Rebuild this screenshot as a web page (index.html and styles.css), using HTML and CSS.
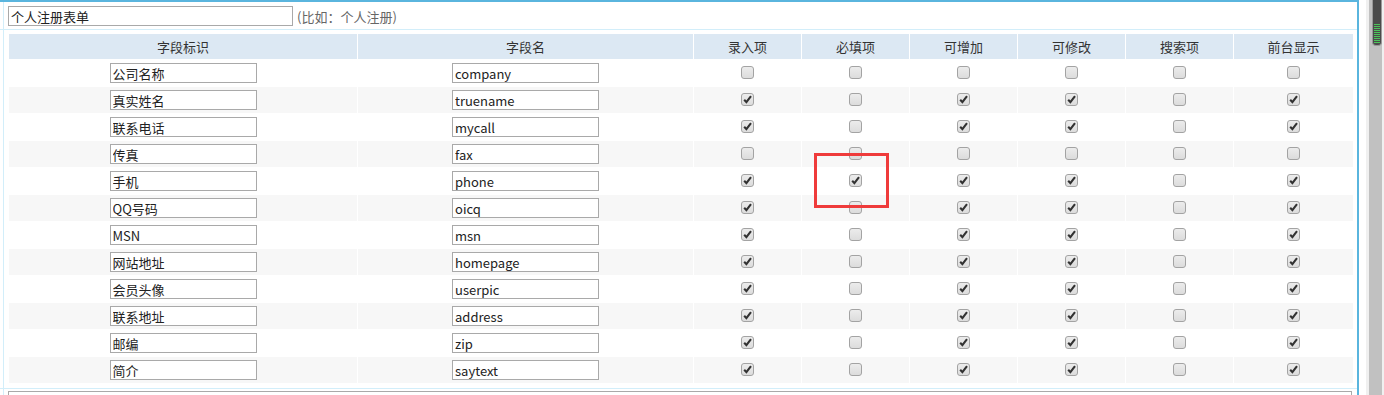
FILE: index.html
```html
<!DOCTYPE html>
<html lang="zh-CN">
<head>
  <meta charset="UTF-8">
  <title>会员注册表单字段</title>
  <link rel="stylesheet" href="styles.css">
</head>
<body>
  <div class="page">
    <div class="frame">
      <div class="linha">
        <div class="celula titulo">
          <input type="text" class="nome-form" value="个人注册表单">
          <span class="dica">(比如：个人注册)</span>
        </div>
      </div>
      <div class="linha">
        <div class="celula tabela-wrap">
          <table class="campos">
            <thead>
              <tr>
                <th class="c-id">字段标识</th>
                <th class="c-nome">字段名</th>
                <th class="c-chk">录入项</th>
                <th class="c-chk">必填项</th>
                <th class="c-chk">可增加</th>
                <th class="c-chk">可修改</th>
                <th class="c-chk">搜索项</th>
                <th class="c-ult">前台显示</th>
              </tr>
            </thead>
            <tbody id="corpo"></tbody>
          </table>
        </div>
      </div>
      <div class="linha">
        <div class="celula rodape">
          <textarea class="texto"></textarea>
        </div>
      </div>
    </div>
    <div class="scrollbar">
      <div class="trilho"><div class="polegar"><div class="listras"></div></div></div>
    </div>
    <div class="marca"></div>
  </div>
  <script>
    const campos = [
      ["公司名称", "company", [0, 0, 0, 0, 0, 0]],
      ["真实姓名", "truename", [1, 0, 1, 1, 0, 1]],
      ["联系电话", "mycall", [1, 0, 1, 1, 0, 1]],
      ["传真", "fax", [0, 0, 0, 0, 0, 0]],
      ["手机", "phone", [1, 1, 1, 1, 0, 1]],
      ["QQ号码", "oicq", [1, 0, 1, 1, 0, 1]],
      ["MSN", "msn", [1, 0, 1, 1, 0, 1]],
      ["网站地址", "homepage", [1, 0, 1, 1, 0, 1]],
      ["会员头像", "userpic", [1, 0, 1, 1, 0, 1]],
      ["联系地址", "address", [1, 0, 1, 1, 0, 1]],
      ["邮编", "zip", [1, 0, 1, 1, 0, 1]],
      ["简介", "saytext", [1, 0, 1, 1, 0, 1]]
    ];

    const corpo = document.getElementById("corpo");
    campos.forEach(([titulo, nome, marcas]) => {
      const tr = document.createElement("tr");
      let html = `<td><input type="text" class="campo" value="${titulo}"></td>`;
      html += `<td><input type="text" class="campo" value="${nome}"></td>`;
      marcas.forEach(m => {
        html += `<td><input type="checkbox" class="chk"${m ? " checked" : ""}></td>`;
      });
      tr.innerHTML = html;
      corpo.appendChild(tr);
    });
  </script>
</body>
</html>
```

FILE: styles.css
```css
body {
  margin: 0;
  font-family: "Noto Sans CJK SC", "Noto Sans", sans-serif;
  font-size: 13px;
  color: #333;
  background: #fff;
  overflow: hidden;
}
.page {
  position: relative;
  display: flex;
  height: 395px;
}
.frame {
  width: 1357px;
  border-top: 2px solid #5ab5de;
  border-right: 2px solid #5ab5de;
  flex-shrink: 0;
}
.linha {
  border-bottom: 1px solid #d2eefa;
}
.celula {
  margin-left: 3px;
  border-left: 1px solid #d2eefa;
}
.titulo {
  display: flex;
  align-items: center;
  gap: 4px;
  padding: 4px 4px 3px;
}
.nome-form {
  box-sizing: border-box;
  width: 285px;
  height: 20px;
  margin: 0;
  padding: 0 2px;
  border: 1px solid #a9a9a9;
  font: inherit;
  color: #222;
}
.dica {
  color: #666;
}
.tabela-wrap {
  padding: 3px 4px 4px;
}
.campos {
  border-collapse: separate;
  border-spacing: 1px;
  table-layout: fixed;
  width: 1346px;
}
.campos th {
  height: 25px;
  padding: 0;
  background: #dce8f3;
  font-weight: normal;
  color: #333;
}
.c-id { width: 348px; }
.c-nome { width: 335px; }
.c-chk { width: 107px; }
.c-ult { width: 119px; }
.campos td {
  height: 26px;
  padding: 0;
  text-align: center;
  vertical-align: middle;
}
.campos tbody tr:nth-child(even) td {
  background: #f7f7f7;
}
.campo {
  display: block;
  box-sizing: border-box;
  width: 147px;
  height: 20px;
  margin: 0 auto;
  padding: 0 2px;
  border: 1px solid #a9a9a9;
  background: #fff;
  font: inherit;
  color: #222;
}
.chk {
  appearance: none;
  -webkit-appearance: none;
  display: block;
  box-sizing: border-box;
  width: 13px;
  height: 13px;
  margin: -1px auto 0;
  border: 1px solid #a3a3a3;
  border-radius: 3px;
  background: linear-gradient(#ececec, #dcdcdc);
}
.chk:checked {
  background: url("data:image/svg+xml;utf8,<svg xmlns='http://www.w3.org/2000/svg' width='11' height='11'><path d='M2.2 5.8 L4.4 8.2 L9 2.2' fill='none' stroke='%23333' stroke-width='2.1'/></svg>") center / 11px 11px no-repeat, linear-gradient(#ececec, #dcdcdc);
}
.rodape {
  padding: 2px 4px 0;
  height: 20px;
}
.texto {
  box-sizing: border-box;
  display: block;
  width: 1344px;
  height: 60px;
  margin: 0;
  border: 1px solid #a9a9a9;
  resize: none;
}
.scrollbar {
  box-sizing: border-box;
  width: 18px;
  margin-left: 7px;
  padding: 0 2px 0 3px;
  background: #f0f0f0;
  flex-shrink: 0;
}
.trilho {
  height: 100%;
  background: #c1c1c1;
  padding-left: 3px;
}
.polegar {
  box-sizing: border-box;
  width: 10px;
  height: 46px;
  padding-top: 24px;
  background: #4b4b4b;
  border: 1px solid #9a9a9a;
  border-top: none;
  border-radius: 0 0 4px 4px;
}
.listras {
  width: 6px;
  height: 19px;
  margin-left: 1px;
  background: repeating-linear-gradient(#4cc35a 0 1px, transparent 1px 2px);
}
.marca {
  position: absolute;
  left: 814px;
  top: 153px;
  width: 75px;
  height: 55px;
  box-sizing: border-box;
  border: 3px solid #ef3b3b;
}
```
